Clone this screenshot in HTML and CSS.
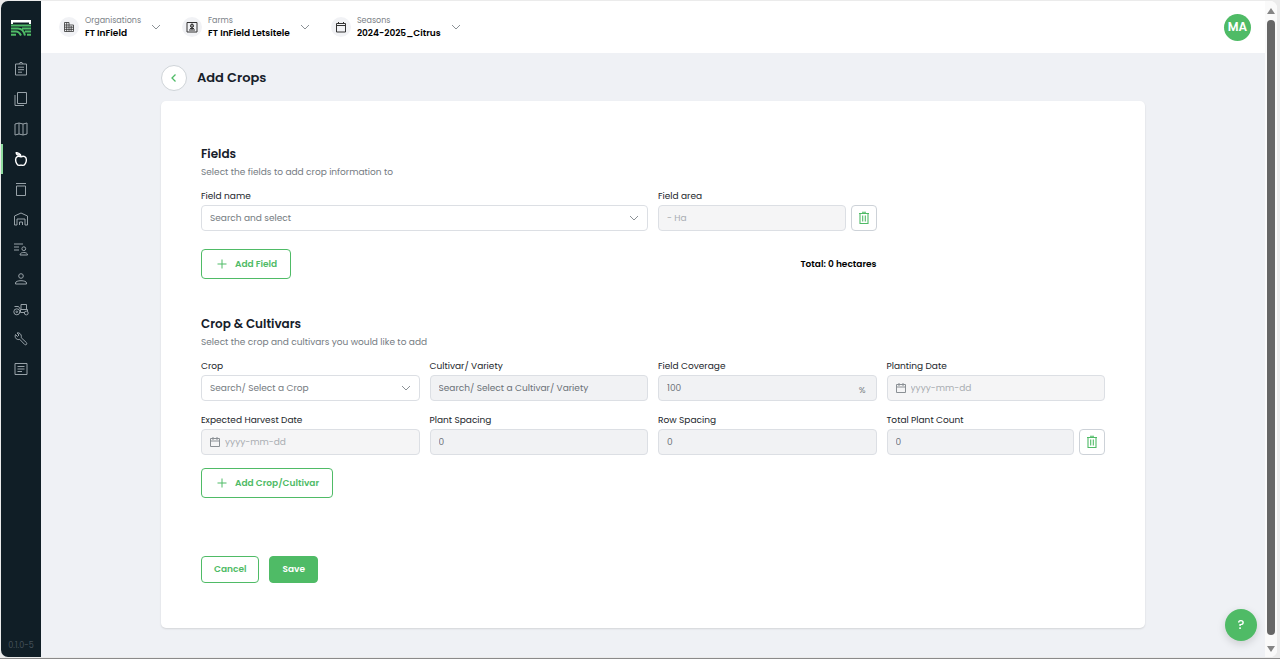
FILE: index.html
```html
<!DOCTYPE html>
<html lang="en">
<head>
    <meta charset="UTF-8">
    <meta name="viewport" content="width=device-width, initial-scale=1.0">
    <title>Add Crops</title>
    <link rel="stylesheet" href="styles.css">
</head>
<body>
    <!-- Shared icons -->
    <svg class="sprite" aria-hidden="true">
        <symbol id="chevron-down" viewBox="0 0 10 10">
            <path d="M1 3l4 4 4-4" fill="none" stroke="currentColor"/>
        </symbol>
        <symbol id="plus" viewBox="0 0 10 10">
            <path d="M5 0.5v9M0.5 5h9" fill="none" stroke="currentColor"/>
        </symbol>
        <symbol id="trash" viewBox="0 0 12 14">
            <path d="M4 1.2h4M1 2.5h10M2 2.5v10h8v-10M4.700 4.500v6M7.300 4.500v6" fill="none" stroke="currentColor" stroke-width="1.100"/>
        </symbol>
        <symbol id="calendar" viewBox="0 0 12 12">
            <path d="M1.500 2.500h9v8h-9zM1.500 5h9M4 1v3M8 1v3" fill="none" stroke="currentColor"/>
        </symbol>
    </svg>

    <div class="window">
        <nav class="sidebar" aria-label="Main">
            <a href="#" class="logo" aria-label="Home">
                <svg viewBox="0 0 20 17" width="20" height="17">
                    <path d="M0 1h20v4h-2V3.500H2V5H0z" fill="#fff"/>
                    <path d="M0 6.500h20M0 9.500h7c4 0 6 3 7 7M0 12.500h5c3 0 4 2 5 4M0 15.700h5M20 9.500h-9M20 12.500h-6M20 15.700h-4" fill="none" stroke="#4fbb66" stroke-width="2"/>
                </svg>
            </a>
            <a href="#" class="nav-item" aria-label="Tasks">
                <svg viewBox="0 0 16 16"><path d="M2.500 3h11v11h-11zM6 3l1-1.500h2L10 3M5 6.200h6M5 8.700h6M5 11.200h4"/></svg>
            </a>
            <a href="#" class="nav-item" aria-label="Documents">
                <svg viewBox="0 0 16 16"><path d="M4.500 1.500h9v11h-9zM2 4v10.500h9"/></svg>
            </a>
            <a href="#" class="nav-item" aria-label="Map">
                <svg viewBox="0 0 16 16"><path d="M2 3l4-1 4 1 4-1v11l-4 1-4-1-4 1zM6 2v11M10 3v11"/></svg>
            </a>
            <a href="#" class="nav-item active" aria-label="Crops">
                <svg viewBox="0 0 16 16"><path d="M8 5.800C5.200 4.300 2.600 5.800 2.600 8.700c0 2.600 1.700 5.700 3.700 5.700.7 0 1-.3 1.700-.3s1 .3 1.700.3c2 0 3.700-3.100 3.700-5.700 0-2.900-2.600-4.400-5.400-2.900z"/><path d="M8 5.800C8 4 7 2.800 5.800 2.300M3.200 1.800c0 1.700 1.500 2.400 3.300 2.200C6.400 2.500 5 1.600 3.200 1.800z"/></svg>
            </a>
            <a href="#" class="nav-item" aria-label="Storage">
                <svg viewBox="0 0 16 16"><path d="M3.500 5h9v9.500h-9zM3 2.500h10"/></svg>
            </a>
            <a href="#" class="nav-item" aria-label="Warehouse">
                <svg viewBox="0 0 16 16"><path d="M1.500 14V5L8 2l6.500 3v9H12V8H4v6zM6.500 14v-3h3v3"/></svg>
            </a>
            <a href="#" class="nav-item" aria-label="Team">
                <svg viewBox="0 0 16 16"><path d="M1 3h9M1 6h5M1 9h5M7 14c0-2 2-2.500 3.800-2.500s3.700.5 3.700 2.500z"/><circle cx="10.800" cy="7.700" r="1.900"/></svg>
            </a>
            <a href="#" class="nav-item" aria-label="Users">
                <svg viewBox="0 0 16 16"><circle cx="8" cy="5" r="2.300"/><path d="M2.500 13v-1c0-1.500 2.500-2.300 5.500-2.300s5.500.8 5.500 2.300v1z"/></svg>
            </a>
            <a href="#" class="nav-item" aria-label="Equipment">
                <svg viewBox="0 0 16 16"><circle cx="3.800" cy="10.800" r="3"/><circle cx="3.800" cy="10.800" r=".8"/><circle cx="13.300" cy="12" r="1.900"/><path d="M1.500 5.500h4l2 3v3h4M8 8.500h6.500v2M8 8.500V3.500h5.500v5"/></svg>
            </a>
            <a href="#" class="nav-item" aria-label="Tools">
                <svg viewBox="0 0 16 16"><path d="M2.500 3.500c-1 2 0 4.500 2.200 5 .8.200 1.500 0 2-.2l5 5.200c1.400 1 2.700-.5 1.800-1.800l-5.300-5c.5-2-.2-3.900-2.200-4.700-.7-.2-1.400-.2-2 0l2 2-1.500 1.500z"/></svg>
            </a>
            <a href="#" class="nav-item" aria-label="Reports">
                <svg viewBox="0 0 16 16"><path d="M2 2.500h12v11H2zM4.500 5.500h7M4.500 8h7M4.500 10.500h4.500"/></svg>
            </a>
            <span class="version">0.1.0-5</span>
        </nav>

        <div class="content">
            <header class="topbar">
                <button type="button" class="switcher">
                    <span class="switcher-icon">
                        <svg viewBox="0 0 12 12" width="12" height="12"><path d="M1.500 1.500h4.500v9H1.500zM6 4h4.500v6.500H6M1.500 4H6M1.500 6.200h9M1.500 8.400h9M3.700 1.500v9M8.200 5v5" fill="none" stroke="currentColor" stroke-width=".8"/></svg>
                    </span>
                    <span class="switcher-text">
                        <span class="switcher-label">Organisations</span>
                        <span class="switcher-value">FT InField</span>
                    </span>
                    <svg class="chevron"><use href="#chevron-down"/></svg>
                </button>
                <button type="button" class="switcher">
                    <span class="switcher-icon">
                        <svg viewBox="0 0 12 12" width="12" height="12"><path d="M1 1.500h10v9.500H1zM3 9h6M4 7.500h4M6 2.500v6" fill="none" stroke="currentColor"/><circle cx="6" cy="4.800" r="1.600" fill="none" stroke="currentColor"/></svg>
                    </span>
                    <span class="switcher-text">
                        <span class="switcher-label">Farms</span>
                        <span class="switcher-value">FT InField Letsitele</span>
                    </span>
                    <svg class="chevron"><use href="#chevron-down"/></svg>
                </button>
                <button type="button" class="switcher">
                    <span class="switcher-icon">
                        <svg viewBox="0 0 12 12" width="12" height="12"><path d="M1.500 2.500h9v8.500h-9zM1.500 4.500h9M3.500 1v1.500M8.500 1v1.500" fill="none" stroke="currentColor"/></svg>
                    </span>
                    <span class="switcher-text">
                        <span class="switcher-label">Seasons</span>
                        <span class="switcher-value">2024-2025_Citrus</span>
                    </span>
                    <svg class="chevron"><use href="#chevron-down"/></svg>
                </button>
                <button type="button" class="avatar">MA</button>
            </header>

            <main class="page">
                <div class="page-heading">
                    <a href="#" class="back" aria-label="Back">
                        <svg viewBox="0 0 8 8" width="8" height="8"><path d="M5.500 0.500L2 4l3.500 3.500" fill="none" stroke="currentColor" stroke-width="1.300"/></svg>
                    </a>
                    <h1>Add Crops</h1>
                </div>

                <form class="card">
                    <section class="fields">
                        <h2>Fields</h2>
                        <p class="hint">Select the fields to add crop information to</p>
                        <div class="form-grid">
                            <div class="field wide">
                                <label for="field-name">Field name</label>
                                <div class="control">
                                    <select id="field-name"><option>Search and select</option></select>
                                    <svg class="chevron"><use href="#chevron-down"/></svg>
                                </div>
                            </div>
                            <div class="field">
                                <label for="field-area">Field area</label>
                                <div class="with-delete">
                                    <input type="text" id="field-area" class="pale" placeholder="- Ha" disabled>
                                    <button type="button" class="delete" aria-label="Remove field"><svg><use href="#trash"/></svg></button>
                                </div>
                            </div>
                            <div class="add-row">
                                <button type="button" class="btn btn-add"><svg><use href="#plus"/></svg>Add Field</button>
                                <strong class="total">Total: 0 hectares</strong>
                            </div>
                        </div>
                    </section>

                    <section class="crops">
                        <h2>Crop &amp; Cultivars</h2>
                        <p class="hint">Select the crop and cultivars you would like to add</p>
                        <div class="form-grid">
                            <div class="field">
                                <label for="crop">Crop</label>
                                <div class="control">
                                    <select id="crop"><option>Search/ Select a Crop</option></select>
                                    <svg class="chevron"><use href="#chevron-down"/></svg>
                                </div>
                            </div>
                            <div class="field">
                                <label for="cultivar">Cultivar/ Variety</label>
                                <select id="cultivar" disabled><option>Search/ Select a Cultivar/ Variety</option></select>
                            </div>
                            <div class="field">
                                <label for="coverage">Field Coverage</label>
                                <div class="control">
                                    <input type="text" id="coverage" value="100" disabled>
                                    <span class="unit">%</span>
                                </div>
                            </div>
                            <div class="field">
                                <label for="planting-date">Planting Date</label>
                                <div class="control date">
                                    <svg class="date-icon"><use href="#calendar"/></svg>
                                    <input type="text" id="planting-date" class="pale" placeholder="yyyy-mm-dd" disabled>
                                </div>
                            </div>
                            <div class="field">
                                <label for="harvest-date">Expected Harvest Date</label>
                                <div class="control date">
                                    <svg class="date-icon"><use href="#calendar"/></svg>
                                    <input type="text" id="harvest-date" class="pale" placeholder="yyyy-mm-dd" disabled>
                                </div>
                            </div>
                            <div class="field">
                                <label for="plant-spacing">Plant Spacing</label>
                                <input type="text" id="plant-spacing" value="0" disabled>
                            </div>
                            <div class="field">
                                <label for="row-spacing">Row Spacing</label>
                                <input type="text" id="row-spacing" value="0" disabled>
                            </div>
                            <div class="field">
                                <label for="plant-count">Total Plant Count</label>
                                <div class="with-delete">
                                    <input type="text" id="plant-count" value="0" disabled>
                                    <button type="button" class="delete" aria-label="Remove crop"><svg><use href="#trash"/></svg></button>
                                </div>
                            </div>
                        </div>
                        <button type="button" class="btn btn-add"><svg><use href="#plus"/></svg>Add Crop/Cultivar</button>
                    </section>

                    <div class="actions">
                        <button type="button" class="btn">Cancel</button>
                        <button type="submit" class="btn btn-primary">Save</button>
                    </div>
                </form>
            </main>
        </div>

        <div class="scrollbar" aria-hidden="true">
            <span class="arrow up"></span>
            <span class="thumb"></span>
            <span class="arrow down"></span>
        </div>
    </div>

    <button type="button" class="help" aria-label="Help">?</button>
</body>
</html>
```
FILE: styles.css
```css
* {
    box-sizing: border-box;
}
body {
    margin: 0;
    padding: 1px 3px 1px 1px;
    min-height: 100vh;
    display: flex;
    background-color: #ebebeb;
    border-bottom: 1px solid #8a8a8a;
    font-family: 'Poppins', 'Inter', sans-serif;
    font-size: 9px;
    color: #16202a;
}
button, input, select {
    font-family: inherit;
    font-size: inherit;
}
button {
    cursor: pointer;
}
h1, h2, p {
    margin: 0;
}
.sprite {
    position: absolute;
    width: 0;
    height: 0;
}
.window {
    flex: 1;
    display: flex;
    background-color: #fff;
    border-radius: 7px;
    overflow: hidden;
}

/* Sidebar */
.sidebar {
    width: 40px;
    flex-shrink: 0;
    display: flex;
    flex-direction: column;
    align-items: center;
    background-color: #101e26;
}
.logo {
    height: 53px;
    padding-top: 18px;
}
.logo svg {
    display: block;
}
.nav-item {
    width: 100%;
    height: 30px;
    display: flex;
    align-items: center;
    justify-content: center;
    border-left: 2px solid transparent;
    border-right: 2px solid transparent;
    color: #98a2a8;
}
.nav-item svg {
    width: 16px;
    height: 16px;
    fill: none;
    stroke: currentColor;
    stroke-width: 1;
}
.nav-item.active {
    border-left-color: #8fdc9f;
    color: #fff;
}
.nav-item.active svg {
    stroke-width: 1.4;
}
.version {
    margin-top: auto;
    padding-bottom: 4px;
    font-size: 8px;
    line-height: 14px;
    color: #46525a;
}

/* Top bar */
.content {
    flex: 1;
    min-width: 0;
    display: flex;
    flex-direction: column;
    background-color: #eff1f5;
}
.topbar {
    height: 52px;
    padding: 0 14px 0 18px;
    display: flex;
    align-items: center;
    gap: 21px;
    background-color: #fff;
}
.switcher {
    display: flex;
    align-items: center;
    padding: 0;
    border: none;
    background: none;
    text-align: left;
    color: #000;
}
.switcher-icon {
    width: 20px;
    height: 20px;
    margin-right: 6px;
    display: flex;
    align-items: center;
    justify-content: center;
    border-radius: 50%;
    background-color: #f1f2f5;
    color: #333;
}
.switcher-text {
    margin-right: 10px;
    display: flex;
    flex-direction: column;
    line-height: 13px;
}
.switcher-label {
    font-size: 8px;
    color: #7c8288;
}
.switcher-value {
    font-weight: 600;
}
.chevron {
    width: 10px;
    height: 10px;
    color: #8b9196;
}
.avatar {
    width: 27px;
    height: 27px;
    margin-left: auto;
    padding: 0;
    border: none;
    border-radius: 50%;
    background-color: #4fbb66;
    color: #fff;
    font-size: 12px;
    font-weight: 600;
}

/* Page */
.page {
    padding: 12px 120px 28px;
}
.page-heading {
    display: flex;
    align-items: center;
    gap: 10px;
    margin-bottom: 10px;
}
.back {
    width: 26px;
    height: 26px;
    display: flex;
    align-items: center;
    justify-content: center;
    border: 1px solid #cfd4d8;
    border-radius: 50%;
    background-color: #fff;
    color: #4fbb66;
}
h1 {
    font-size: 13px;
    font-weight: 600;
}
.card {
    padding: 44px 40px 45px;
    border-radius: 5px;
    background-color: #fff;
    box-shadow: 0 1px 2px rgba(0, 0, 0, 0.12);
}
h2 {
    font-size: 12px;
    line-height: 18px;
    font-weight: 600;
}
.hint {
    margin-bottom: 6px;
    line-height: 18px;
    color: #757b82;
}
.fields {
    margin-bottom: 36px;
}
.form-grid {
    display: grid;
    grid-template-columns: repeat(4, 1fr);
    gap: 10px;
}
.field {
    min-width: 0;
}
.wide {
    grid-column: span 2;
}
label {
    display: block;
    line-height: 18px;
    color: #22262b;
}
input, select {
    display: block;
    width: 100%;
    height: 26px;
    padding: 0 8px;
    border: 1px solid #dcdfe4;
    border-radius: 4px;
    background-color: #fff;
    color: #747a80;
    appearance: none;
    opacity: 1;
}
input:disabled, select:disabled {
    background-color: #f1f2f4;
    color: #6b7177;
}
input.pale:disabled {
    background-color: #f5f5f6;
}
input::placeholder {
    color: #a9adb2;
}
.control {
    position: relative;
}
.control .chevron {
    position: absolute;
    right: 9px;
    top: 8px;
    pointer-events: none;
}
.unit {
    position: absolute;
    right: 11px;
    top: 9px;
    line-height: 12px;
    color: #777d83;
}
.date-icon {
    position: absolute;
    left: 8px;
    top: 7px;
    width: 12px;
    height: 12px;
    color: #8b9095;
}
.date input {
    padding-left: 23px;
}
.with-delete {
    display: flex;
    gap: 5px;
}
.delete {
    width: 26px;
    height: 26px;
    flex-shrink: 0;
    display: flex;
    align-items: center;
    justify-content: center;
    padding: 0;
    border: 1px solid #cdd2d8;
    border-radius: 4px;
    background-color: #fff;
    color: #4fbb66;
}
.delete svg {
    width: 12px;
    height: 14px;
}
.add-row {
    grid-column: 1 / span 3;
    margin-top: 8px;
    display: flex;
    align-items: center;
    justify-content: space-between;
}
.total {
    font-weight: 600;
    color: #000;
}

/* Buttons */
.btn {
    height: 27px;
    padding: 0 12px;
    border: 1px solid #4fbb66;
    border-radius: 4px;
    background-color: #fff;
    color: #4fbb66;
    font-weight: 600;
}
.btn-add {
    height: 30px;
    padding: 0 13px 0 15px;
    display: flex;
    align-items: center;
    gap: 8px;
}
.btn-add svg {
    width: 10px;
    height: 10px;
}
.crops .btn-add {
    margin-top: 13px;
}
.btn-primary {
    background-color: #4fbb66;
    color: #fff;
}
.actions {
    margin-top: 58px;
    display: flex;
    gap: 10px;
}

/* Scrollbar */
.scrollbar {
    width: 12px;
    flex-shrink: 0;
    padding: 7px 2px 5px;
    display: flex;
    flex-direction: column;
    align-items: center;
    gap: 6px;
    background-color: #fafafa;
}
.thumb {
    flex: 1;
    width: 8px;
    border-radius: 4px;
    background-color: #666;
}
.arrow {
    border-left: 4px solid transparent;
    border-right: 4px solid transparent;
}
.up {
    border-bottom: 6px solid #858585;
}
.down {
    margin-top: 5px;
    border-top: 6px solid #858585;
}
.help {
    position: fixed;
    right: 23px;
    bottom: 18px;
    width: 32px;
    height: 32px;
    padding: 0;
    border: none;
    border-radius: 50%;
    background-color: #4fbb66;
    box-shadow: 0 3px 8px rgba(0, 0, 0, 0.15);
    color: #fff;
    font-size: 13px;
    font-weight: 500;
}
```
